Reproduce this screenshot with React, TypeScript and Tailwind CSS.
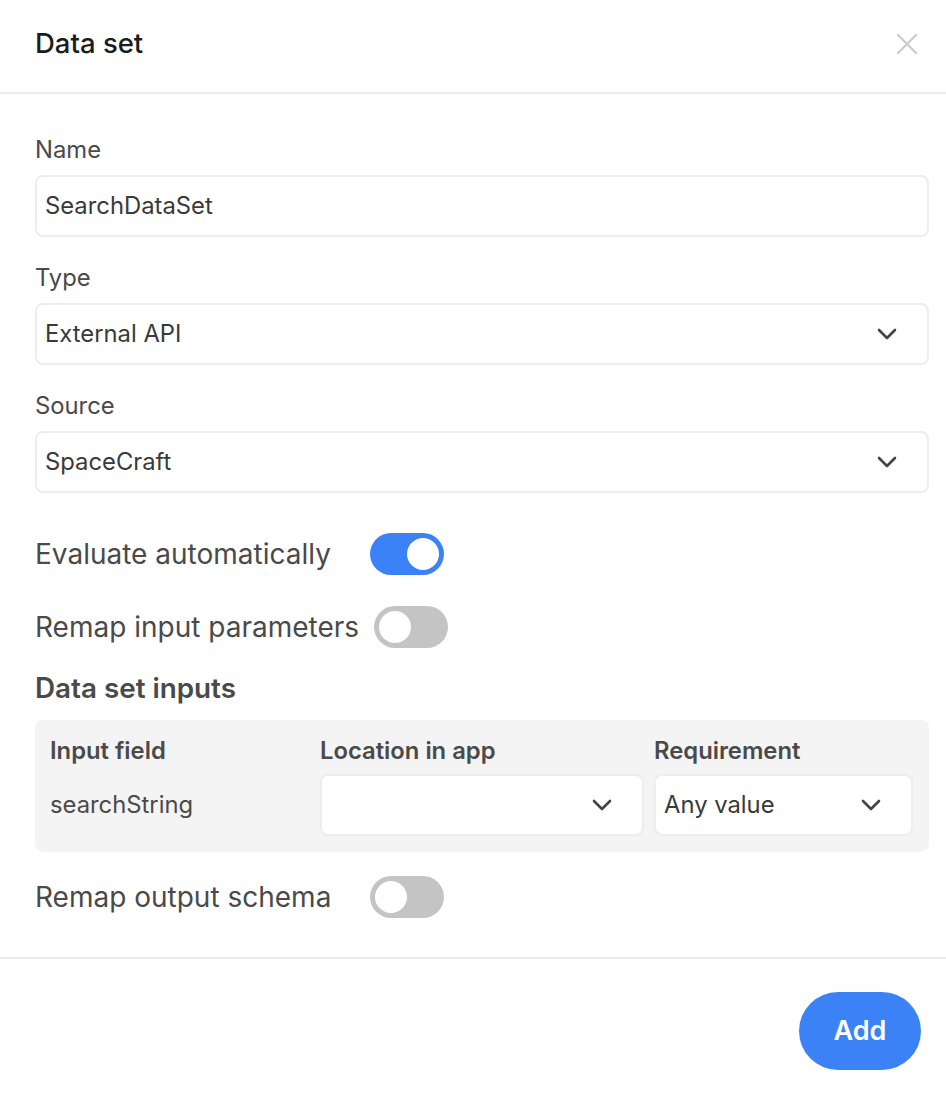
import React from "react";

function Chevron() {
  return (
    <svg width="20" height="12" viewBox="0 0 20 12" fill="none">
      <path d="M2 2 L10 10 L18 2" stroke="#444444" strokeWidth="2.6" strokeLinecap="round" strokeLinejoin="round" />
    </svg>
  );
}

function Toggle({ on }: { on: boolean }) {
  return (
    <div
      className={
        "flex h-[42px] w-[74px] shrink-0 items-center rounded-full px-[5px] " +
        (on ? "justify-end bg-[#3b82f6]" : "justify-start bg-[#c4c4c4]")
      }
    >
      <div className="h-[32px] w-[32px] rounded-full bg-white" />
    </div>
  );
}

function Field({ label, value, select }: { label: string; value: string; select?: boolean }) {
  return (
    <div className="flex flex-col">
      <div className="mb-[10px] h-[30px] text-[23.8px] leading-[30px] text-[#4a4a4a]">{label}</div>
      <div className="flex h-[62px] items-center justify-between rounded-[8px] border-2 border-[#ededed] pl-[8px] pr-[30px] text-[23.8px] text-[#3a3a3a]">
        <span>{value}</span>
        {select && <Chevron />}
      </div>
    </div>
  );
}

function ToggleRow({ label, on }: { label: string; on: boolean }) {
  return (
    <div className="flex items-center">
      <div className="min-w-[335px] pr-[15px] text-[28px] text-[#4a4a4a]">{label}</div>
      <Toggle on={on} />
    </div>
  );
}

export default function App() {
  return (
    <div className="flex h-[1098px] w-[946px] flex-col bg-white" style={{ fontFamily: "Inter, 'Noto Sans', sans-serif" }}>
      <div className="flex h-[94px] shrink-0 items-center justify-between border-b-2 border-[#ececec] pl-[35px] pr-[28px] pb-[4px]">
        <div className="text-[27.5px] font-medium text-[#1c1c1c]">Data set</div>
        <svg width="22" height="22" viewBox="0 0 22 22" fill="none">
          <path d="M2 2 L20 20 M20 2 L2 20" stroke="#cccccc" strokeWidth="2.4" strokeLinecap="round" />
        </svg>
      </div>

      <div className="flex flex-col pl-[35px] pr-[17px] pt-[41px] pb-[39px] border-b-2 border-[#ececec]">
        <div className="flex flex-col gap-[26px]">
          <Field label="Name" value="SearchDataSet" />
          <Field label="Type" value="External API" select />
          <Field label="Source" value="SpaceCraft" select />
        </div>

        <div className="mt-[40px] flex flex-col gap-[31px]">
          <ToggleRow label="Evaluate automatically" on />
          <ToggleRow label="Remap input parameters" on={false} />
        </div>

        <div className="mt-[24px] text-[27.8px] font-semibold leading-[32px] text-[#4a4a4a]">Data set inputs</div>

        <div className="mt-[16px] rounded-[8px] bg-[#f4f4f4] pl-[15px] pr-[16px] pt-[17px] pb-[16px]">
          <div className="grid grid-cols-[260px_324px_259px] gap-x-[10px] gap-y-[10px]">
            <div className="text-[23.8px] font-semibold leading-[27px] text-[#4a4a4a]">Input field</div>
            <div className="text-[23.8px] font-semibold leading-[27px] text-[#4a4a4a]">Location in app</div>
            <div className="text-[23.8px] font-semibold leading-[27px] text-[#4a4a4a]">Requirement</div>
            <div className="flex items-center text-[23.8px] text-[#4a4a4a]">searchString</div>
            <div className="flex h-[62px] items-center justify-end rounded-[8px] border-2 border-[#ededed] bg-white pr-[30px]">
              <Chevron />
            </div>
            <div className="flex h-[62px] items-center justify-between rounded-[8px] border-2 border-[#ededed] bg-white pl-[8px] pr-[30px] text-[23.8px] text-[#3a3a3a]">
              <span>Any value</span>
              <Chevron />
            </div>
          </div>
        </div>

        <div className="mt-[24px]">
          <ToggleRow label="Remap output schema" on={false} />
        </div>
      </div>

      <div className="flex justify-end pr-[25px] pt-[33px]">
        <button className="flex h-[78px] w-[122px] items-center justify-center rounded-full bg-[#3b82f6] text-[27px] font-semibold text-white">
          Add
        </button>
      </div>
    </div>
  );
}
